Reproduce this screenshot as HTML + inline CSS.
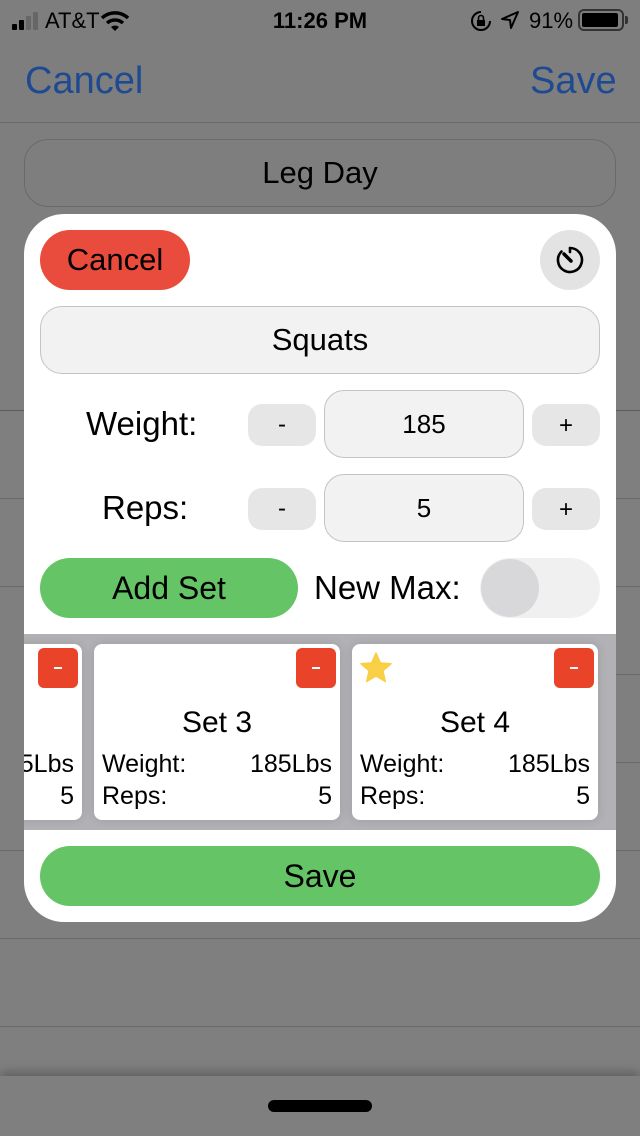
<!DOCTYPE html>
<html><head><meta charset="utf-8"><style>
*{margin:0;padding:0;box-sizing:border-box}
body{width:640px;height:1136px;background:#7f7f7f;font-family:"Liberation Sans",sans-serif;position:relative;overflow:hidden;color:#000}
.abs{position:absolute}
.line{position:absolute;left:0;width:640px;height:1px;background:#6a6a6a}
.pill{position:absolute;background:#e6e6e6;border-radius:14px;font-size:24px;text-align:center}
.box{position:absolute;background:#f2f2f2;border:1px solid #c4c4c4;text-align:center}
.card{position:absolute;top:644px;height:176px;background:#fff;border-radius:8px;box-shadow:0 0 10px rgba(0,0,0,.12)}
.rm{position:absolute;top:4px;width:40px;height:40px;background:#e9442a;border-radius:6px}
.rm::after{content:"";position:absolute;left:16px;top:19px;width:8px;height:2px;background:#fff}
.row{position:absolute;left:8px;right:8px;font-size:25px;display:flex;justify-content:space-between}
</style></head><body>
<div class="abs" style="left:0;top:0;width:640px;height:410px;background:#7e7e7e"></div>
<div class="abs" style="left:12px;top:24px;width:5px;height:6px;background:#000;border-radius:1px"></div>
<div class="abs" style="left:19px;top:20px;width:5px;height:10px;background:#000;border-radius:1px"></div>
<div class="abs" style="left:26px;top:16px;width:5px;height:14px;background:#666;border-radius:1px"></div>
<div class="abs" style="left:33px;top:12px;width:5px;height:18px;background:#666;border-radius:1px"></div>
<div class="abs" style="left:45px;top:8px;font-size:22px">AT&amp;T</div>
<svg class="abs" style="left:100px;top:10px" width="30" height="22" viewBox="0 0 30 22"><path d="M2 8 A19 19 0 0 1 28 8" stroke="#000" stroke-width="3.5" fill="none"/><path d="M7 13 A12 12 0 0 1 23 13" stroke="#000" stroke-width="3.5" fill="none"/><path d="M11 17 L15 21 L19 17 A6 6 0 0 0 11 17Z" fill="#000"/></svg>
<div class="abs" style="left:0;width:640px;top:8px;text-align:center;font-size:22px;font-weight:bold">11:26 PM</div>
<svg class="abs" style="left:470px;top:10px" width="22" height="22" viewBox="0 0 22 22"><path d="M11 2 A9 9 0 1 0 20 11" stroke="#000" stroke-width="2" fill="none"/><rect x="7" y="10" width="8" height="6" fill="#000"/><path d="M8.5 10 V8 A2.5 2.5 0 0 1 13.5 8 V10" stroke="#000" stroke-width="1.6" fill="none"/></svg>
<svg class="abs" style="left:500px;top:10px" width="20" height="20" viewBox="0 0 20 20"><path d="M18 2 L2 9 L10 10 L11 18 Z" stroke="#000" stroke-width="2" fill="none" stroke-linejoin="round"/></svg>
<div class="abs" style="left:529px;top:8px;font-size:22px">91%</div>
<div class="abs" style="left:578px;top:9px;width:46px;height:22px;border:2px solid #333;border-radius:6px;padding:2px"><div style="width:36px;height:14px;background:#000;border-radius:2px"></div></div>
<div class="abs" style="left:625px;top:16px;width:3px;height:8px;background:#333;border-radius:0 2px 2px 0"></div>
<div class="abs" style="left:25px;top:60px;font-size:38px;color:#1e4a92">Cancel</div>
<div class="abs" style="left:530px;top:60px;font-size:38px;color:#1e4a92">Save</div>
<div class="line" style="top:122px"></div>
<div class="abs" style="left:24px;top:139px;width:592px;height:68px;border:1px solid #6a6a6a;border-radius:24px;text-align:center;font-size:31px;line-height:66px">Leg Day</div>
<div class="line" style="top:410px;background:#5a5a5a"></div>
<div class="line" style="top:498px"></div>
<div class="line" style="top:586px"></div>
<div class="line" style="top:674px"></div>
<div class="line" style="top:762px"></div>
<div class="line" style="top:850px"></div>
<div class="line" style="top:938px"></div>
<div class="line" style="top:1026px"></div>
<div class="abs" style="left:0;top:1076px;width:640px;height:60px;background:#7f7f7f;box-shadow:0 -4px 10px rgba(0,0,0,.25)"></div>
<div class="abs" style="left:268px;top:1100px;width:104px;height:12px;background:#000;border-radius:6px"></div>
<div class="abs" style="left:24px;top:214px;width:592px;height:708px;background:#fff;border-radius:40px"></div>
<div class="abs" style="left:40px;top:230px;width:150px;height:60px;background:#e94b3c;border-radius:30px;font-size:31px;text-align:center;line-height:60px">Cancel</div>
<div class="abs" style="left:540px;top:230px;width:60px;height:60px;background:#e3e3e3;border-radius:30px"></div>
<svg class="abs" style="left:554px;top:244px" width="32" height="32" viewBox="0 0 32 32"><path d="M16 4 A12 12 0 1 1 7.5 7.5" stroke="#000" stroke-width="2.6" fill="none" stroke-linecap="round"/><path d="M16 4 L16 8" stroke="#000" stroke-width="2.6" stroke-linecap="round"/><path d="M10 10 L17 17" stroke="#000" stroke-width="3.5" stroke-linecap="round"/></svg>
<div class="box" style="left:40px;top:306px;width:560px;height:68px;border-radius:22px;font-size:31px;line-height:66px">Squats</div>
<div class="abs" style="left:86px;top:405px;font-size:33px">Weight:</div>
<div class="pill" style="left:248px;top:404px;width:68px;height:42px;line-height:42px">-</div>
<div class="box" style="left:324px;top:390px;width:200px;height:68px;border-radius:20px;font-size:26px;line-height:66px">185</div>
<div class="pill" style="left:532px;top:404px;width:68px;height:42px;line-height:44px">+</div>
<div class="abs" style="left:102px;top:489px;font-size:33px">Reps:</div>
<div class="pill" style="left:248px;top:488px;width:68px;height:42px;line-height:42px">-</div>
<div class="box" style="left:324px;top:474px;width:200px;height:68px;border-radius:20px;font-size:26px;line-height:66px">5</div>
<div class="pill" style="left:532px;top:488px;width:68px;height:42px;line-height:44px">+</div>
<div class="abs" style="left:40px;top:558px;width:258px;height:60px;background:#64c466;border-radius:30px;font-size:32px;text-align:center;line-height:60px">Add Set</div>
<div class="abs" style="left:314px;top:569px;font-size:33px">New Max:</div>
<div class="abs" style="left:480px;top:558px;width:120px;height:60px;background:#f0f0f0;border-radius:30px"></div>
<div class="abs" style="left:481px;top:559px;width:58px;height:58px;background:#d8d8da;border-radius:29px"></div>
<div class="abs" style="left:24px;top:634px;width:592px;height:196px;background:#b2b2b6"></div>
<div class="card" style="left:-10px;width:92px"><div class="rm" style="left:48px"></div>
<div class="row" style="top:106px;justify-content:flex-end"><span>5Lbs</span></div>
<div class="row" style="top:138px;justify-content:flex-end"><span>5</span></div></div>
<div class="card" style="left:94px;width:246px"><div class="rm" style="left:202px"></div>
<div class="abs" style="left:0;width:246px;top:62px;text-align:center;font-size:30px">Set 3</div>
<div class="row" style="top:106px"><span>Weight:</span><span>185Lbs</span></div>
<div class="row" style="top:138px"><span>Reps:</span><span>5</span></div></div>
<div class="card" style="left:352px;width:246px"><div class="rm" style="left:202px"></div>
<svg class="abs" style="left:6px;top:6px" width="36" height="36" viewBox="0 0 24 24"><path d="M12 2 L14.9 8.6 L22 9.2 L16.6 13.9 L18.2 21 L12 17.3 L5.8 21 L7.4 13.9 L2 9.2 L9.1 8.6 Z" fill="#f8cf46" stroke="#f8cf46" stroke-linejoin="round"/></svg>
<div class="abs" style="left:0;width:246px;top:62px;text-align:center;font-size:30px">Set 4</div>
<div class="row" style="top:106px"><span>Weight:</span><span>185Lbs</span></div>
<div class="row" style="top:138px"><span>Reps:</span><span>5</span></div></div>
<div class="abs" style="left:0;top:634px;width:24px;height:196px;background:#7f7f7f"></div>
<div class="abs" style="left:40px;top:846px;width:560px;height:60px;background:#64c466;border-radius:30px;font-size:32px;text-align:center;line-height:60px">Save</div>
</body></html>
